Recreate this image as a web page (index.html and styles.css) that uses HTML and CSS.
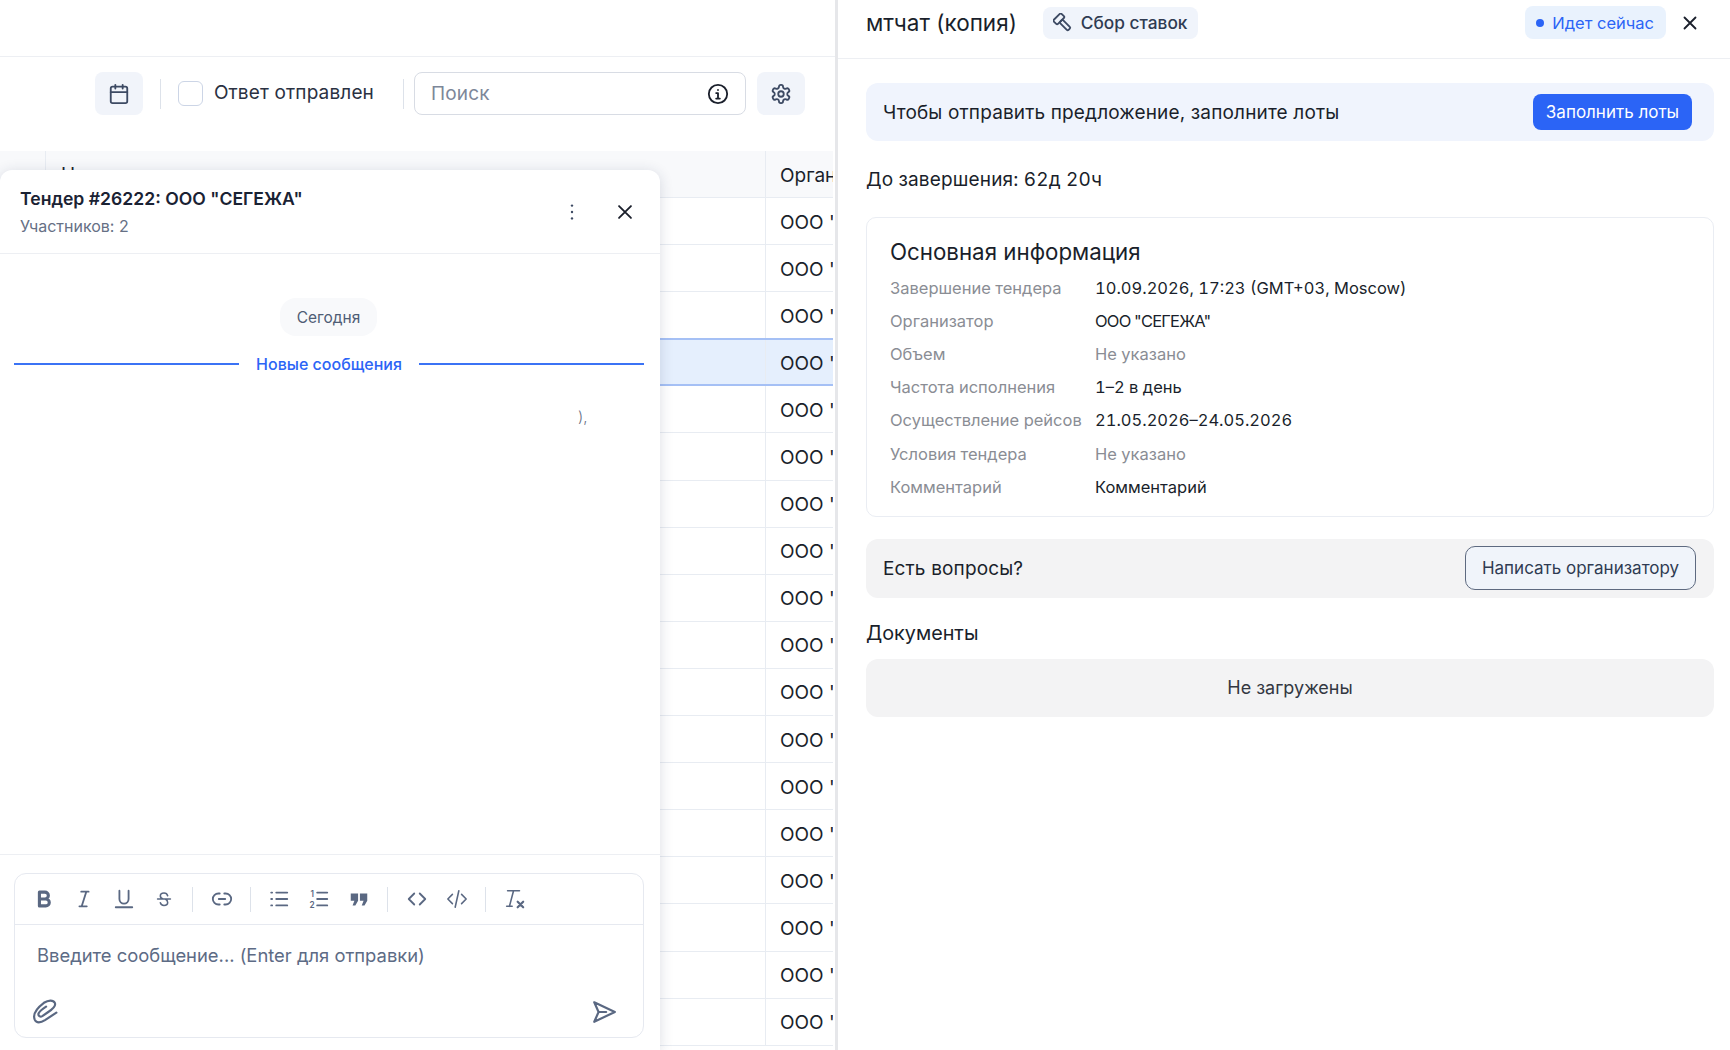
FILE: index.html
```html
<!DOCTYPE html>
<html>
<head>
  <meta charset="UTF-8">
  <meta name="viewport" content="width=device-width, initial-scale=1">
  <link rel="stylesheet" href="styles.css">
</head>
<body>
  <div class="container">
    <div class="list-pane">
      <div class="top-bar"></div>
      <div class="toolbar">
        <button class="icon-button">
          <svg class="icon" viewBox="0 0 24 24"><rect x="3" y="4" width="18" height="18" rx="2"/><path d="M3 10h18M8 2v4M16 2v4"/></svg>
        </button>
        <div class="separator"></div>
        <span class="checkbox"></span>
        <span class="checkbox-label">Ответ отправлен</span>
        <div class="separator sep-search"></div>
        <div class="search">
          <span class="search-text">Поиск</span>
          <svg class="icon dark" viewBox="0 0 24 24"><circle cx="12" cy="12" r="10"/><path d="M12 17v-6M10 11h2M10 17h4M12 7.5v.1"/></svg>
        </div>
        <button class="icon-button">
          <svg class="icon" viewBox="0 0 24 24"><path d="M12.22 2h-.44a2 2 0 0 0-2 2v.18a2 2 0 0 1-1 1.73l-.43.25a2 2 0 0 1-2 0l-.15-.08a2 2 0 0 0-2.73.73l-.22.38a2 2 0 0 0 .73 2.73l.15.1a2 2 0 0 1 1 1.72v.51a2 2 0 0 1-1 1.74l-.15.09a2 2 0 0 0-.73 2.73l.22.38a2 2 0 0 0 2.73.73l.15-.08a2 2 0 0 1 2 0l.43.25a2 2 0 0 1 1 1.73V20a2 2 0 0 0 2 2h.44a2 2 0 0 0 2-2v-.18a2 2 0 0 1 1-1.73l.43-.25a2 2 0 0 1 2 0l.15.08a2 2 0 0 0 2.73-.73l.22-.39a2 2 0 0 0-.73-2.73l-.15-.08a2 2 0 0 1-1-1.74v-.5a2 2 0 0 1 1-1.74l.15-.09a2 2 0 0 0 .73-2.73l-.22-.38a2 2 0 0 0-2.73-.73l-.15.08a2 2 0 0 1-2 0l-.43-.25a2 2 0 0 1-1-1.73V4a2 2 0 0 0-2-2z"/><circle cx="12" cy="12" r="3"/></svg>
        </button>
      </div>
      <div class="table">
        <div class="row head"><div class="cell"></div><div class="cell name">Наименование</div><div class="cell org">Организатор</div></div>
        <div class="row"><div class="cell"></div><div class="cell"></div><div class="cell org">ООО "СЕГЕЖА"</div></div>
        <div class="row"><div class="cell"></div><div class="cell"></div><div class="cell org">ООО "СЕГЕЖА"</div></div>
        <div class="row"><div class="cell"></div><div class="cell"></div><div class="cell org">ООО "СЕГЕЖА"</div></div>
        <div class="row selected"><div class="cell"></div><div class="cell"></div><div class="cell org">ООО "СЕГЕЖА"</div></div>
        <div class="row"><div class="cell"></div><div class="cell"></div><div class="cell org">ООО "СЕГЕЖА"</div></div>
        <div class="row"><div class="cell"></div><div class="cell"></div><div class="cell org">ООО "СЕГЕЖА"</div></div>
        <div class="row"><div class="cell"></div><div class="cell"></div><div class="cell org">ООО "СЕГЕЖА"</div></div>
        <div class="row"><div class="cell"></div><div class="cell"></div><div class="cell org">ООО "СЕГЕЖА"</div></div>
        <div class="row"><div class="cell"></div><div class="cell"></div><div class="cell org">ООО "СЕГЕЖА"</div></div>
        <div class="row"><div class="cell"></div><div class="cell"></div><div class="cell org">ООО "СЕГЕЖА"</div></div>
        <div class="row"><div class="cell"></div><div class="cell"></div><div class="cell org">ООО "СЕГЕЖА"</div></div>
        <div class="row"><div class="cell"></div><div class="cell"></div><div class="cell org">ООО "СЕГЕЖА"</div></div>
        <div class="row"><div class="cell"></div><div class="cell"></div><div class="cell org">ООО "СЕГЕЖА"</div></div>
        <div class="row"><div class="cell"></div><div class="cell"></div><div class="cell org">ООО "СЕГЕЖА"</div></div>
        <div class="row"><div class="cell"></div><div class="cell"></div><div class="cell org">ООО "СЕГЕЖА"</div></div>
        <div class="row"><div class="cell"></div><div class="cell"></div><div class="cell org">ООО "СЕГЕЖА"</div></div>
        <div class="row"><div class="cell"></div><div class="cell"></div><div class="cell org">ООО "СЕГЕЖА"</div></div>
        <div class="row"><div class="cell"></div><div class="cell"></div><div class="cell org">ООО "СЕГЕЖА"</div></div>
      </div>
    </div>

    <div class="drawer">
      <div class="drawer-header">
        <h2 class="drawer-title">мтчат (копия)</h2>
        <span class="type-badge">
          <svg class="icon gavel" viewBox="0 0 24 24"><g transform="rotate(-45 12 12)"><rect x="5.500" y="1.500" width="13" height="7" rx="1.500"/><rect x="9.500" y="8.500" width="5" height="14" rx="1.500"/></g></svg>
          Сбор ставок
        </span>
        <span class="status-badge"><span class="status-dot"></span>Идет сейчас</span>
        <svg class="close" viewBox="0 0 24 24"><path d="M6 6l12 12M18 6L6 18"/></svg>
      </div>
      <div class="drawer-body">
        <div class="banner">
          <span>Чтобы отправить предложение, заполните лоты</span>
          <button class="primary-button">Заполнить лоты</button>
        </div>
        <div class="deadline">До завершения: 62д 20ч</div>
        <div class="info-card">
          <h3>Основная информация</h3>
          <div class="info-row"><span class="info-label">Завершение тендера</span><span>10.09.2026, 17:23 (GMT+03, Moscow)</span></div>
          <div class="info-row"><span class="info-label">Организатор</span><span class="tight">ООО "СЕГЕЖА"</span></div>
          <div class="info-row"><span class="info-label">Объем</span><span class="muted">Не указано</span></div>
          <div class="info-row"><span class="info-label">Частота исполнения</span><span>1–2 в день</span></div>
          <div class="info-row"><span class="info-label">Осуществление рейсов</span><span>21.05.2026–24.05.2026</span></div>
          <div class="info-row"><span class="info-label">Условия тендера</span><span class="muted">Не указано</span></div>
          <div class="info-row"><span class="info-label">Комментарий</span><span>Комментарий</span></div>
        </div>
        <div class="question-bar">
          <span>Есть вопросы?</span>
          <button class="outline-button">Написать организатору</button>
        </div>
        <div class="docs-title">Документы</div>
        <div class="docs-empty">Не загружены</div>
      </div>
    </div>

    <div class="chat">
      <div class="chat-header">
        <div class="chat-heading">
          <div class="chat-title">Тендер #26222: ООО "СЕГЕЖА"</div>
          <div class="chat-sub">Участников: 2</div>
        </div>
        <svg class="dots" viewBox="0 0 24 24"><circle cx="12" cy="5" r="1.3"/><circle cx="12" cy="12" r="1.3"/><circle cx="12" cy="19" r="1.3"/></svg>
        <svg class="close" viewBox="0 0 24 24"><path d="M5.500 5.500l13 13M18.500 5.500l-13 13"/></svg>
      </div>
      <div class="chat-messages">
        <span class="date-pill">Сегодня</span>
        <div class="new-line"><span>Новые сообщения</span></div>
        <div class="stray">),</div>
      </div>
      <div class="composer">
        <div class="editor">
          <div class="editor-tools">
            <svg class="tool b" viewBox="0 0 24 24"><path d="M7 4.500h6a3.700 3.700 0 0 1 0 7.500H7zM7 12h7a3.700 3.700 0 0 1 0 7.500H7z"/></svg>
            <svg class="tool" viewBox="0 0 24 24"><path d="M9 4h8M7 20h8M14.500 4l-5 16"/></svg>
            <svg class="tool" viewBox="0 0 24 24"><path d="M7 3v9a5 5 0 0 0 10 0V3M3 21h18"/></svg>
            <svg class="tool thin" viewBox="0 0 24 24"><path d="M5 12h14M16 8.500C15.500 6.500 14 5.500 12 5.500c-2.300 0-4 1.200-4 3.200 0 1.500 1 2.500 3 3.300M8 16c.4 2 2 3 4 3 2.400 0 4-1.300 4-3.200 0-1.500-.7-2.800-2.500-3.800"/></svg>
            <span class="tool-sep"></span>
            <svg class="tool wide" viewBox="0 0 24 24"><path d="M9.500 6H8a6 6 0 0 0 0 12h1.500M14.500 6H16a6 6 0 0 1 0 12h-1.500M8.500 12h7"/></svg>
            <span class="tool-sep"></span>
            <svg class="tool" viewBox="0 0 24 24"><path d="M9 5h12M9 12h12M9 19h12M3.500 5h1M3.500 12h1M3.500 19h1"/></svg>
            <svg class="tool" viewBox="0 0 24 24"><path d="M10 5h11M10 12h11M10 19h11"/><text class="tool-num" x="4.500" y="9.500">1</text><text class="tool-num" x="4.500" y="22">2</text></svg>
            <svg class="tool fill" viewBox="0 0 24 24"><path d="M3 6h8v8l-3 5H5l2-5H3zM13 6h8v8l-3 5h-3l2-5h-4z"/></svg>
            <span class="tool-sep"></span>
            <svg class="tool" viewBox="0 0 24 24"><path d="M9 6l-6 6 6 6M15 6l6 6-6 6"/></svg>
            <svg class="tool thin" viewBox="0 0 24 24"><path d="M7 7l-5 5 5 5M17 7l5 5-5 5M14 3l-4 18"/></svg>
            <span class="tool-sep"></span>
            <svg class="tool thin" viewBox="0 0 24 24"><path d="M5 3h13M11.500 3L7 20M4 20h6"/><path class="thick" d="M16 15l6 6M22 15l-6 6"/></svg>
          </div>
          <div class="editor-text">Введите сообщение... (Enter для отправки)</div>
          <div class="editor-actions">
            <svg class="action" viewBox="0 0 24 24"><path d="M22.500 12.600L12 19.500C8 22 4 22.500 2.500 19 .5 14 5 8 11 3.500 15 1 19.500.5 21 3.500c1.500 3-2 6-6 8.500L9.500 15.800C7.500 17 5.500 15.500 6 13.500 6.500 11.500 10 9 13 7"/></svg>
            <svg class="action send" viewBox="0 0 24 24"><path d="M3 3l19 9-19 9 4-9zM7 12h7"/></svg>
          </div>
        </div>
      </div>
    </div>
  </div>
</body>
</html>
```

FILE: styles.css
```css
html, body {
  height: 100%;
  margin: 0;
  padding: 0;
}

body {
  font-family: Inter, "Noto Sans", sans-serif;
  color: #1a1f2b;
  background-color: #FFFFFF;
  overflow: hidden;
}

button {
  font-family: inherit;
  cursor: pointer;
}

h2, h3 {
  margin: 0;
  font-weight: 400;
}

.container {
  display: flex;
  height: 1050px;
  position: relative;
  overflow: hidden;
}

.icon {
  width: 22px;
  height: 22px;
  fill: none;
  stroke: #3d4a63;
  stroke-width: 2;
  stroke-linecap: round;
  stroke-linejoin: round;
  flex: none;
}

.icon.dark {
  stroke: #1a1f2b;
}

/* left list */
.list-pane {
  flex: 0 0 835px;
  overflow: hidden;
}

.top-bar {
  height: 56px;
  border-bottom: 1px solid #edeff3;
}

.toolbar {
  display: flex;
  align-items: center;
  justify-content: flex-end;
  height: 43px;
  margin-top: 15px;
  padding-right: 30px;
}

.icon-button {
  width: 48px;
  height: 43px;
  border: none;
  border-radius: 8px;
  background-color: #f1f4fa;
  display: flex;
  align-items: center;
  justify-content: center;
  padding: 0;
}

.separator {
  width: 1px;
  height: 30px;
  background-color: #dde2ea;
  margin: 0 17px;
}

.sep-search {
  margin: 0 10px 0 29px;
}

.checkbox {
  width: 23px;
  height: 23px;
  border: 1px solid #ccd5e6;
  border-radius: 6px;
}

.checkbox-label {
  margin-left: 11px;
  margin-bottom: 2px;
  font-size: 19px;
  letter-spacing: 0.15px;
  color: #2a3142;
}

.search {
  width: 332px;
  height: 43px;
  box-sizing: border-box;
  border: 1px solid #d8dce4;
  border-radius: 8px;
  display: flex;
  align-items: center;
  justify-content: space-between;
  padding: 0 16px;
  margin-right: 11px;
}

.search-text {
  font-size: 19px;
  letter-spacing: 0.15px;
  color: #7d8799;
}

.table {
  margin-top: 36px;
  margin-right: 2px;
  overflow: hidden;
}

.row {
  display: grid;
  grid-template-columns: 46px 720px 1fr;
  height: 47.1px;
  box-sizing: border-box;
  border-bottom: 1px solid #e8ecf2;
}

.row.head {
  height: 47px;
  background-color: #f8f9fb;
}

.row.selected {
  background-color: #e5effd;
  border-top: 2px solid #a5c0f5;
  border-bottom: 2px solid #a5c0f5;
  margin-top: -1px;
  height: 48.1px;
}

.cell {
  border-right: 1px solid #e8ecf2;
  display: flex;
  align-items: center;
  font-size: 19px;
  white-space: nowrap;
  overflow: hidden;
}

.cell.name {
  padding-left: 15px;
}

.cell.org {
  border-right: none;
  padding: 2px 0 0 14px;
  color: #1a1f2b;
}

/* right drawer */
.drawer {
  flex: 1;
  border-left: 3px solid #e6e7ea;
  min-width: 0;
}

.drawer-header {
  height: 59px;
  box-sizing: border-box;
  border-bottom: 1px solid #edeff3;
  padding: 0 29px 13px 28px;
  display: flex;
  align-items: center;
}

.drawer-title {
  font-size: 22.500px;
  color: #1a1f2b;
}

.type-badge {
  display: flex;
  align-items: center;
  gap: 8px;
  height: 32px;
  margin-left: 26px;
  padding: 0 11px 0 10px;
  background-color: #f0f4fb;
  border-radius: 8px;
  font-size: 17.300px;
  font-weight: 500;
  color: #2f3b52;
}

.gavel {
  width: 20px;
  height: 20px;
  stroke-width: 2.200;
}

.status-badge {
  display: flex;
  align-items: center;
  height: 33px;
  margin-left: auto;
  padding: 0 12px 0 11px;
  background-color: #e9f2fd;
  border-radius: 8px;
  font-size: 16.500px;
  color: #2b64f6;
}

.status-dot {
  width: 8px;
  height: 8px;
  border-radius: 50%;
  background-color: #2b64f6;
  margin-right: 8.500px;
}

.close {
  width: 22px;
  height: 22px;
  fill: none;
  stroke: #1a1f2b;
  stroke-width: 2;
  stroke-linecap: round;
  flex: none;
}

.drawer-header .close {
  margin-left: 13px;
}

.drawer-body {
  padding: 24px 16px 0 28px;
}

.banner {
  height: 58px;
  box-sizing: border-box;
  background-color: #f0f4fd;
  border-radius: 12px;
  padding: 0 22px 0 17px;
  display: flex;
  align-items: center;
  justify-content: space-between;
  font-size: 19px;
  letter-spacing: 0.15px;
}

.primary-button {
  height: 36px;
  width: 159px;
  padding: 0;
  border: none;
  border-radius: 8px;
  background-color: #2b64f6;
  color: #FFFFFF;
  font-size: 17px;
  letter-spacing: 0;
}

.deadline {
  margin-top: 28px;
  font-size: 19px;
  letter-spacing: 0.15px;
  font-variant-numeric: tabular-nums;
  line-height: 22px;
}

.info-card {
  margin-top: 26px;
  height: 300px;
  box-sizing: border-box;
  border: 1px solid #eaedf3;
  border-radius: 10px;
  padding: 20px 23px 0;
}

.info-card h3 {
  font-size: 22.300px;
  line-height: 27px;
  margin-bottom: 6px;
  font-weight: 400;
}

.info-row {
  display: flex;
  height: 33.2px;
  align-items: center;
  font-size: 16.500px;
  color: #1a1f2b;
  font-variant-numeric: tabular-nums;
}

.info-label {
  width: 205px;
  flex: none;
  color: #8a8d94;
  white-space: nowrap;
}

.muted {
  color: #8a8d94;
}

.tight {
  letter-spacing: -0.8px;
}

.question-bar {
  margin-top: 22px;
  height: 59px;
  box-sizing: border-box;
  background-color: #f3f3f4;
  border-radius: 12px;
  padding: 0 18px 0 17px;
  display: flex;
  align-items: center;
  justify-content: space-between;
  font-size: 19px;
  letter-spacing: 0.15px;
}

.outline-button {
  width: 231px;
  height: 44px;
  margin-bottom: 2px;
  padding: 0;
  border: 1px solid #5e6a80;
  border-radius: 10px;
  background-color: #f0f4fa;
  color: #2f3b52;
  font-size: 17px;
  letter-spacing: 0;
}

.docs-title {
  margin-top: 23px;
  font-size: 19.800px;
  line-height: 24px;
}

.docs-empty {
  margin-top: 14px;
  height: 58px;
  box-sizing: border-box;
  padding-bottom: 2px;
  background-color: #f3f3f4;
  border-radius: 12px;
  display: flex;
  align-items: center;
  justify-content: center;
  font-size: 18px;
  color: #333842;
}

/* chat window, floats over the list */
.chat {
  position: absolute;
  left: 0;
  top: 170px;
  bottom: 0;
  width: 660px;
  background-color: #FFFFFF;
  border-radius: 12px 12px 0 0;
  box-shadow: 0 2px 14px rgba(30, 45, 80, 0.16);
  display: flex;
  flex-direction: column;
}

.chat-header {
  height: 84px;
  box-sizing: border-box;
  border-bottom: 1px solid #edeff3;
  padding: 0 24px 0 20px;
  display: flex;
  align-items: center;
}

.chat-heading {
  flex: 1;
}

.chat-title {
  font-size: 17.600px;
  font-weight: 600;
  line-height: 24px;
  color: #1a2233;
}

.chat-sub {
  margin-top: 5px;
  font-size: 16px;
  line-height: 20px;
  color: #667085;
}

.dots {
  width: 22px;
  height: 22px;
  fill: #3d4a63;
  margin-right: 31px;
}

.chat-messages {
  flex: 1;
  position: relative;
  display: flex;
  flex-direction: column;
  align-items: center;
  padding-top: 44px;
}

.date-pill {
  height: 38px;
  width: 97px;
  margin-right: 3px;
  display: flex;
  align-items: center;
  justify-content: center;
  border-radius: 16px;
  background-color: #f8f9fb;
  font-size: 15.500px;
  color: #4f5d75;
}

.new-line {
  align-self: stretch;
  margin: 18px 16px 0 14px;
  display: flex;
  align-items: center;
  gap: 17px;
  font-size: 16px;
  font-weight: 500;
  color: #2b64f6;
  line-height: 20px;
}

.new-line::before, .new-line::after {
  content: "";
  flex: 1;
  height: 2px;
  background-color: #3b73f5;
}

.stray {
  position: absolute;
  left: 578px;
  top: 153px;
  font-size: 15px;
  font-weight: 300;
  color: #667085;
}

.composer {
  border-top: 1px solid #edeff3;
  padding: 18px 16px 12px 14px;
}

.editor {
  height: 165px;
  box-sizing: border-box;
  border: 1px solid #e6e9f0;
  border-radius: 12px;
  display: flex;
  flex-direction: column;
}

.editor-tools {
  height: 51px;
  flex: none;
  box-sizing: border-box;
  border-bottom: 1px solid #e6e9f0;
  padding: 0 0 0 18px;
  display: flex;
  align-items: center;
  gap: 18px;
}

.tool {
  width: 22px;
  height: 22px;
  fill: none;
  stroke: #5a6882;
  stroke-width: 2;
  stroke-linecap: round;
  stroke-linejoin: round;
  flex: none;
}

.tool.b {
  stroke-width: 3.400;
}

.tool.thin {
  stroke-width: 1.700;
}

.tool.fill {
  fill: #5a6882;
  stroke: none;
}

.tool .thick {
  stroke-width: 2.400;
}

.tool-num {
  font-family: Inter, sans-serif;
  font-size: 9px;
  font-weight: 600;
  fill: #5a6882;
  stroke: none;
  text-anchor: middle;
}

.tool-sep {
  width: 1px;
  height: 25px;
  margin: 0 -0.75px;
  background-color: #dde2ea;
}

.editor-text {
  padding: 0 22px;
  margin-top: 18px;
  font-size: 18.400px;
  line-height: 24px;
  color: #5d6b85;
}

.editor-actions {
  margin-top: auto;
  padding: 0 26px 12px 17px;
  display: flex;
  justify-content: space-between;
}

.action {
  width: 26px;
  height: 26px;
  fill: none;
  stroke: #5a6882;
  stroke-width: 2;
  stroke-linecap: round;
  stroke-linejoin: round;
}
```
